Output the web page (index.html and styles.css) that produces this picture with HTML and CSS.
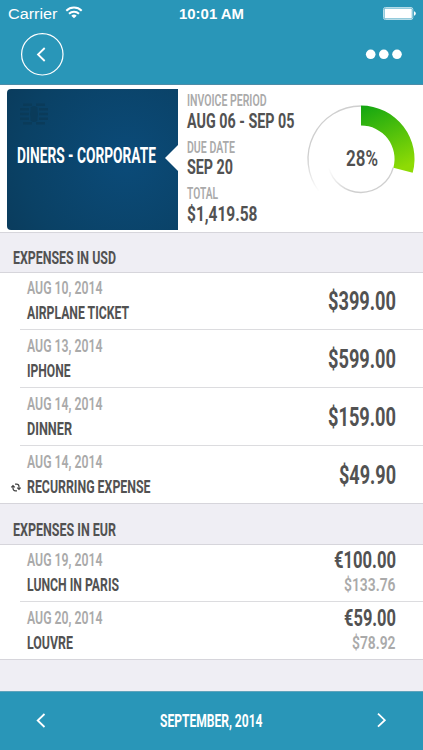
FILE: index.html
```html
<!DOCTYPE html>
<html lang="en">
<head>
<meta charset="utf-8">
<title>Expenses</title>
<link rel="stylesheet" href="styles.css">
</head>
<body>
<div class="app">
  <header class="top">
    <div class="status">
      <div class="carrier">
        <svg class="line" width="50" height="20"><text x="0" y="16" textLength="49.500" lengthAdjust="spacingAndGlyphs">Carrier</text></svg>
        <svg class="wifi" width="18" height="13" viewBox="0 0 18 13" fill="none" stroke="#fff" stroke-width="2"><path d="M1.300 4.700A11 11 0 0 1 16.700 4.700M4 7.700A7.200 7.200 0 0 1 14 7.700"/><path d="M9 12.300L6.300 9.700A4 4 0 0 1 11.700 9.700Z" fill="#fff" stroke="none"/></svg>
      </div>
      <svg class="line clock" width="66" height="20"><text x="0" y="16" textLength="65" lengthAdjust="spacingAndGlyphs">10:01 AM</text></svg>
      <svg class="battery" width="33" height="13" viewBox="0 0 33 13"><rect x=".5" y=".5" width="29.300" height="12" rx="1.800" fill="none" stroke="#b5dce8"/><rect x="1.500" y="1.500" width="27.300" height="10" rx=".5" fill="#fff"/><path d="M31 4.300Q32.800 4.500 32.800 6.500T31 8.700Z" fill="#fff"/></svg>
    </div>
    <nav class="nav">
      <svg width="44" height="44" viewBox="0 0 44 44" fill="none" stroke="#fff"><circle cx="22.300" cy="22.300" r="20.700" stroke-width="1.200"/><path d="M24.700 16L18 22.500L24.700 29" stroke-width="1.800"/></svg>
      <svg width="38" height="12" viewBox="0 0 38 12" fill="#fff"><circle cx="5.700" cy="6.300" r="4.800"/><circle cx="18.800" cy="6.300" r="4.800"/><circle cx="32" cy="6.300" r="4.800"/></svg>
    </nav>
  </header>

  <section class="summary">
    <div class="card">
      <svg class="chip" width="28" height="22" viewBox="0 0 28 22" fill="none" stroke="#0a3853" stroke-width="2.600"><path d="M3 1.800H12M16 1.800H25M0 6.300H9M19 6.300H28M0 11H9M19 11H28M0 15.700H9M19 15.700H28M3 20.200H12M16 20.200H25"/><path d="M10.500 4.500Q14 1.500 17.500 4.500V8Q18.500 11 17.500 14V17.500Q14 20.500 10.500 17.500V14Q9.500 11 10.500 8Z" fill="#0a3853" stroke="none"/></svg>
      <svg class="line cardname" width="140" height="20"><text x="0" y="17" textLength="139" lengthAdjust="spacingAndGlyphs">DINERS - CORPORATE</text></svg>
      <span class="notch"></span>
    </div>
    <div class="facts">
      <svg class="line label" width="80" height="15"><text x="0" y="14" textLength="79.500" lengthAdjust="spacingAndGlyphs">INVOICE PERIOD</text></svg>
      <svg class="line value" width="108" height="21"><text x="0" y="20.500" textLength="107.500" lengthAdjust="spacingAndGlyphs">AUG 06 - SEP 05</text></svg>
      <svg class="line label" width="48" height="25"><text x="0" y="24.500" textLength="48" lengthAdjust="spacingAndGlyphs">DUE DATE</text></svg>
      <svg class="line value" width="46" height="21"><text x="0" y="20.500" textLength="46" lengthAdjust="spacingAndGlyphs">SEP 20</text></svg>
      <svg class="line label" width="31" height="26"><text x="0" y="25" textLength="31" lengthAdjust="spacingAndGlyphs">TOTAL</text></svg>
      <svg class="line value" width="71" height="22"><text x="0" y="21" textLength="70.500" lengthAdjust="spacingAndGlyphs">$1,419.58</text></svg>
    </div>
    <svg class="gauge" width="110" height="110" viewBox="-55 -55 110 110">
      <defs>
        <linearGradient id="green" x1="0" y1="-53" x2="30" y2="14" gradientUnits="userSpaceOnUse"><stop offset="0" stop-color="#12a512"/><stop offset="1" stop-color="#8edb05"/></linearGradient>
        <linearGradient id="outer" x1="0" y1="0" x2="0" y2="33" gradientUnits="userSpaceOnUse"><stop offset="0" stop-color="#cfcfcf"/><stop offset="1" stop-color="#fff"/></linearGradient>
        <linearGradient id="inner" x1="-8" y1="30" x2="-32" y2="8" gradientUnits="userSpaceOnUse"><stop offset="0" stop-color="#cfcfcf"/><stop offset="1" stop-color="#fff"/></linearGradient>
      </defs>
      <path d="M0 -53A53 53 0 0 0 -42 32.300" fill="none" stroke="url(#outer)" stroke-width="1.300"/>
      <path d="M32.200 8.600A33.300 33.300 0 0 1 -32.300 8.300" fill="none" stroke="url(#inner)" stroke-width="1.400"/>
      <path d="M0 -53.500A53.500 53.500 0 0 1 51.700 13.800L32.400 8.700A33.500 33.500 0 0 0 0 -33.500Z" fill="url(#green)"/>
      <text class="percent" x="-15" y="7" textLength="32" lengthAdjust="spacingAndGlyphs">28%</text>
    </svg>
  </section>

  <h2 class="heading"><svg class="line" width="104" height="20"><text x="0" y="17" textLength="103" lengthAdjust="spacingAndGlyphs">EXPENSES IN USD</text></svg></h2>
  <ul class="list">
    <li class="row"><div class="entry">
      <svg class="line date" width="76" height="20"><text x="0" y="17" textLength="75.500" lengthAdjust="spacingAndGlyphs">AUG 10, 2014</text></svg>
      <svg class="line title" width="103" height="25"><text x="0" y="22" textLength="102" lengthAdjust="spacingAndGlyphs">AIRPLANE TICKET</text></svg></div>
      <svg class="line amount" width="68" height="28"><text x="0" y="23" textLength="68" lengthAdjust="spacingAndGlyphs">$399.00</text></svg></li>
    <li class="row"><div class="entry">
      <svg class="line date" width="76" height="20"><text x="0" y="17" textLength="75.500" lengthAdjust="spacingAndGlyphs">AUG 13, 2014</text></svg>
      <svg class="line title" width="44" height="25"><text x="0" y="22" textLength="43.500" lengthAdjust="spacingAndGlyphs">IPHONE</text></svg></div>
      <svg class="line amount" width="68" height="28"><text x="0" y="23" textLength="68" lengthAdjust="spacingAndGlyphs">$599.00</text></svg></li>
    <li class="row"><div class="entry">
      <svg class="line date" width="76" height="20"><text x="0" y="17" textLength="75.500" lengthAdjust="spacingAndGlyphs">AUG 14, 2014</text></svg>
      <svg class="line title" width="45" height="25"><text x="0" y="22" textLength="45" lengthAdjust="spacingAndGlyphs">DINNER</text></svg></div>
      <svg class="line amount" width="68" height="28"><text x="0" y="23" textLength="68" lengthAdjust="spacingAndGlyphs">$159.00</text></svg></li>
    <li class="row last"><div class="entry">
      <svg class="line date" width="76" height="20"><text x="0" y="17" textLength="75.500" lengthAdjust="spacingAndGlyphs">AUG 14, 2014</text></svg>
      <svg class="line title" width="124" height="25"><text x="0" y="22" textLength="123.500" lengthAdjust="spacingAndGlyphs">RECURRING EXPENSE</text></svg>
      <svg class="repeat" width="10" height="9" viewBox="0 0 10 9" fill="none" stroke="#444" stroke-width="1.200"><path d="M4 1.200H5.500Q8 1.200 8 3.800V5.500M6.200 4.600L8 6.400L9.700 4.600M6 7.800H4.500Q2 7.800 2 5.200V3.500M.3 4.400L2 2.600L3.800 4.400"/></svg></div>
      <svg class="line amount" width="57" height="28"><text x="0" y="23" textLength="57" lengthAdjust="spacingAndGlyphs">$49.90</text></svg></li>
  </ul>

  <h2 class="heading tall"><svg class="line" width="104" height="20"><text x="0" y="17" textLength="103" lengthAdjust="spacingAndGlyphs">EXPENSES IN EUR</text></svg></h2>
  <ul class="list">
    <li class="row"><div class="entry">
      <svg class="line date" width="76" height="20"><text x="0" y="17" textLength="75.500" lengthAdjust="spacingAndGlyphs">AUG 19, 2014</text></svg>
      <svg class="line title" width="93" height="25"><text x="0" y="22" textLength="92" lengthAdjust="spacingAndGlyphs">LUNCH IN PARIS</text></svg></div>
      <div class="pair">
        <svg class="line foreign" width="62" height="22"><text x="0" y="20" textLength="62" lengthAdjust="spacingAndGlyphs">€100.00</text></svg>
        <svg class="line converted" width="52" height="24"><text x="0" y="21" textLength="51.500" lengthAdjust="spacingAndGlyphs">$133.76</text></svg></div></li>
    <li class="row last"><div class="entry">
      <svg class="line date" width="76" height="20"><text x="0" y="17" textLength="75.500" lengthAdjust="spacingAndGlyphs">AUG 20, 2014</text></svg>
      <svg class="line title" width="46" height="25"><text x="0" y="22" textLength="46" lengthAdjust="spacingAndGlyphs">LOUVRE</text></svg></div>
      <div class="pair">
        <svg class="line foreign" width="52" height="22"><text x="0" y="20" textLength="52" lengthAdjust="spacingAndGlyphs">€59.00</text></svg>
        <svg class="line converted" width="44" height="24"><text x="0" y="21" textLength="43.500" lengthAdjust="spacingAndGlyphs">$78.92</text></svg></div></li>
  </ul>

  <footer class="bottom">
    <svg width="12" height="16" viewBox="0 0 12 16" fill="none" stroke="#fff" stroke-width="1.800"><path d="M9.500 1L2.700 7.500L9.500 14"/></svg>
    <svg class="line month" width="103" height="20"><text x="0" y="16" textLength="102.500" lengthAdjust="spacingAndGlyphs">SEPTEMBER, 2014</text></svg>
    <svg width="12" height="16" viewBox="0 0 12 16" fill="none" stroke="#fff" stroke-width="1.800"><path d="M2 .7L8.800 7.200L2 13.700"/></svg>
  </footer>
</div>
</body>
</html>
```
FILE: styles.css
```css
* { box-sizing: border-box; }
body { margin: 0; background: #efeef4; font-family: Roboto, "Liberation Sans", sans-serif; }
svg { display: block; flex: none; overflow: visible; }
.app { width: 423px; height: 750px; display: flex; flex-direction: column; }
.line text { font-weight: 700; font-size: 19px; fill: #525252; }

.top { height: 85px; flex: none; background: #2996b8; border-bottom: 1px solid #4b8ca8; }
.status { height: 28px; padding: 3px 7px 0 8px; display: grid; grid-template-columns: 1fr 66px 1fr; }
.status .line text { font-family: "Liberation Sans", sans-serif; font-size: 15.5px; font-weight: 400; fill: #fff; }
.status .clock text { font-weight: 700; }
.carrier { display: flex; gap: 7px; }
.wifi { margin-top: 3px; }
.battery { justify-self: end; margin-top: 4px; }
.nav { height: 52px; padding: 0 20px; display: flex; align-items: center; justify-content: space-between; }

.summary { height: 148px; flex: none; display: flex; background: #fff; border-bottom: 1px solid #d6d5db; }
.card { position: relative; width: 171px; height: 141px; margin: 4px 0 0 7px; border-radius: 4px 0 0 4px; background: radial-gradient(circle at 70% 50%, #0b4b79, #0a4165 75%, #0a3c5d); }
.chip { margin: 14px 0 0 13px; opacity: .6; }
.cardname { margin: 21px 0 0 10px; }
.cardname text { font-size: 22px; fill: #fff; }
.notch { position: absolute; right: 0; top: 56px; width: 13px; height: 26px; background: #fff; clip-path: polygon(100% 0, 100% 100%, 0 50%); }
.facts { width: 120px; padding: 6.500px 0 0 8.500px; }
.facts .label text { font-size: 16px; font-weight: 600; fill: #aaa; }
.facts .value text { font-size: 20.500px; }
.gauge { margin-top: 19px; margin-left: 8px; }
.percent { font-size: 22px; font-weight: 600; fill: #505050; }

.heading { height: 40px; flex: none; margin: 0; padding: 0 0 5px 13px; display: flex; align-items: flex-end; border-bottom: 1px solid #d6d5db; }
.tall { height: 41px; }
.list { margin: 0; padding: 0; list-style: none; background: #fff; }
.row { height: 58px; margin-left: 20px; padding: 0 27px 7px 6.500px; display: flex; justify-content: space-between; align-items: flex-end; border-bottom: 1px solid #dcdcdf; }
.row:first-child { height: 57px; }
.row.last { margin-left: 0; padding-left: 26.500px; border-color: #d6d5db; }
.entry { position: relative; }
.date text { font-size: 18.500px; font-weight: 600; fill: #aaa; }
.amount { margin-bottom: 7px; }
.amount text { font-size: 25px; }
.pair { display: flex; flex-direction: column; align-items: flex-end; }
.foreign text { font-size: 23.500px; }
.converted text { font-weight: 600; fill: #aaa; }
.repeat { position: absolute; left: -16px; bottom: 4px; }

.bottom { height: 59px; flex: none; margin-top: auto; padding: 0 35px; display: flex; align-items: center; justify-content: space-between; background: #2996b8; border-top: 1px solid #5fa3bb; }
.month text { font-size: 18.500px; fill: #fff; }
```
